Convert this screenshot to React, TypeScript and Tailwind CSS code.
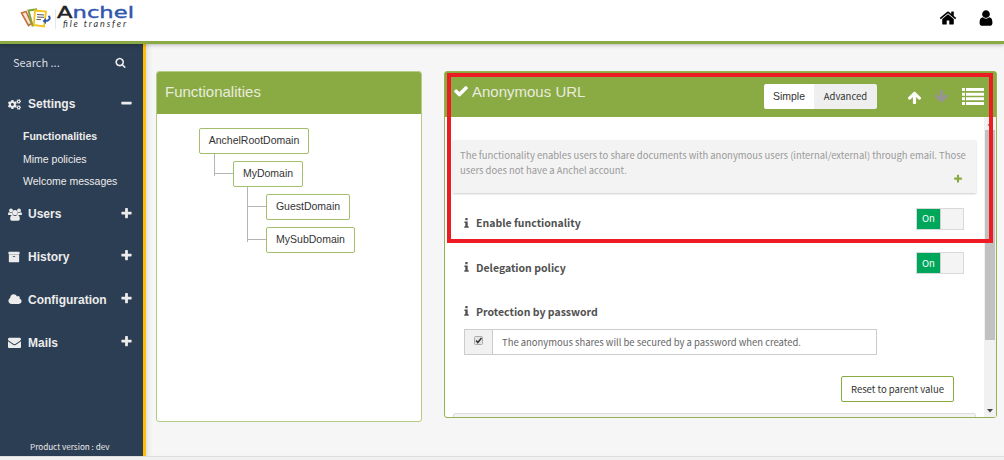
import React from "react";
import { FaCogs } from "react-icons/fa";

const SANS = "font-['Liberation_Sans',Arial,sans-serif]";
const HUMAN = "font-['Noto_Sans_CJK_SC','Noto_Sans',sans-serif]";

const PATHS = {
  search:
    "M1216 832q0-185-131.5-316.5t-316.5-131.5-316.5 131.5-131.5 316.5 131.5 316.5 316.5 131.5 316.5-131.5 131.5-316.5zm512 832q0 52-38 90t-90 38q-54 0-90-38l-343-342q-179 124-399 124-143 0-273.5-55.5t-225-150-150-225-55.5-273.5 55.5-273.5 150-225 225-150 273.5-55.5 273.5 55.5 225 150 150 225 55.5 273.5q0 220-124 399l343 343q37 37 37 90z",
  plus: "M1600 736v192q0 40-28 68t-68 28h-416v416q0 40-28 68t-68 28h-192q-40 0-68-28t-28-68v-416h-416q-40 0-68-28t-28-68v-192q0-40 28-68t68-28h416v-416q0-40 28-68t68-28h192q40 0 68 28t28 68v416h416q40 0 68 28t28 68z",
  minus: "M1600 736v192q0 40-28 68t-68 28h-1216q-40 0-68-28t-28-68v-192q0-40 28-68t68-28h1216q40 0 68 28t28 68z",
  home: "M1472 992v480q0 26-19 45t-45 19h-384v-384h-256v384h-384q-26 0-45-19t-19-45v-480q0-1 .5-3t.5-3l575-474 575 474q1 2 1 6zm223-69l-62 74q-8 9-21 11h-3q-13 0-21-7l-692-577-692 577q-12 8-24 7-13-2-21-11l-62-74q-8-10-7-23.5t11-21.5l719-599q32-26 76-26t76 26l244 204v-195q0-14 9-23t23-9h192q14 0 23 9t9 23v408l219 182q10 8 11 21.5t-7 23.5z",
  user: "M1536 1399q0 109-62.5 187t-150.5 78h-854q-88 0-150.5-78t-62.5-187q0-85 8.5-160.5t31.5-152 58.5-131 94-89 134.5-34.5q131 128 313 128t313-128q76 0 134.5 34.5t94 89 58.5 131 31.5 152 8.5 160.5zm-256-887q0 159-112.5 271.5t-271.5 112.5-271.5-112.5-112.5-271.5 112.5-271.5 271.5-112.5 271.5 112.5 112.5 271.5z",
  check:
    "M1671 566q0 40-28 68l-724 724-136 136q-28 28-68 28t-68-28l-136-136-362-362q-28-28-28-68t28-68l136-136q28-28 68-28t68 28l294 295 656-657q28-28 68-28t68 28l136 136q28 28 28 68z",
  arrow:
    "M1675 971q0 51-37 90l-75 75q-38 38-91 38-54 0-90-38l-294-293v704q0 52-37.5 84.5t-90.5 32.5h-128q-53 0-90.5-32.5t-37.5-84.5v-704l-294 293q-36 38-90 38t-90-38l-75-75q-38-38-38-90 0-53 38-91l651-651q35-37 90-37 54 0 91 37l651 651q37 39 37 91z",
  archive:
    "M1088 832q0-26-19-45t-45-19h-256q-26 0-45 19t-19 45 19 45 45 19h256q26 0 45-19t19-45zm576-192v960q0 26-19 45t-45 19h-1408q-26 0-45-19t-19-45v-960q0-26 19-45t45-19h1408q26 0 45 19t19 45zm64-448v256q0 26-19 45t-45 19h-1536q-26 0-45-19t-19-45v-256q0-26 19-45t45-19h1536q26 0 45 19t19 45z",
  envelope:
    "M1792 710v794q0 66-47 113t-113 47h-1472q-66 0-113-47t-47-113v-794q44 49 101 87 362 246 497 345 57 42 92.5 65.5t94.5 48 110 24.5h2q51 0 110-24.5t94.5-48 92.5-65.5q170-123 498-345 57-39 100-87zm0-294q0 79-49 151t-122 123q-376 261-468 325-10 7-42.5 31t-54 38.5-52 32.5-57.5 27-50 9h-2q-23 0-50-9t-57.5-27-52-32.5-54-38.5-42.5-31q-91-64-262-182.5t-205-142.5q-62-42-117-115.5t-55-136.5q0-78 41.5-130t118.5-52h1472q65 0 112.5 47t47.5 113z",
  cloud:
    "M1984 1152q0 159-112.5 271.5t-271.5 112.5h-1088q-185 0-316.5-131.5t-131.5-316.5q0-132 71-241.5t187-163.5q-2-28-2-43 0-212 150-362t362-150q158 0 286.5 88t187.5 230q70-62 166-62 106 0 181 75t75 181q0 75-41 138 129 30 213 134.5t84 239.5z",
};

function Icon({ name, className, wide = false }: { name: keyof typeof PATHS; className: string; wide?: boolean }) {
  return (
    <svg viewBox={wide ? "0 0 2048 1792" : "0 0 1792 1792"} className={`shrink-0 fill-current ${className}`}>
      <path d={PATHS[name]} />
    </svg>
  );
}

function GroupIcon() {
  return (
    <svg viewBox="0 0 14 13" className="h-[13px] w-[14px] fill-current">
      <circle cx="3" cy="2.400" r="1.900" />
      <circle cx="11" cy="2.400" r="1.900" />
      <path d="M0 6.500C0 4.800 .5 4.200 1.300 4.200C2.500 5 3.500 5 4.200 4.600C4.200 5.600 4.500 6.300 5 7H1.200C.4 7 0 6.900 0 6.500ZM14 6.500C14 4.800 13.500 4.200 12.700 4.200C11.500 5 10.500 5 9.800 4.600C9.800 5.600 9.500 6.300 9 7H12.800C13.600 7 14 6.900 14 6.500Z" />
      <circle cx="7" cy="4.500" r="2.600" />
      <path d="M2.200 10.800C2.200 8.500 3 7.100 4.500 7.100C6 8.200 8 8.200 9.500 7.100C11 7.100 11.800 8.500 11.800 10.800C11.800 12 11.200 12.700 10.200 12.700H3.800C2.800 12.700 2.200 12 2.200 10.800Z" />
    </svg>
  );
}

function InfoIcon() {
  return (
    <svg viewBox="0 0 5 10" className="mb-[2px] h-[10px] w-[5px] shrink-0 fill-current">
      <path d="M1.300 0H3.600V2.200H1.300ZM.4 3.400H3.700V8.200H4.700V9.800H.3V8.200H1.300V5H.4Z" />
    </svg>
  );
}

function Logo() {
  return (
    <svg viewBox="0 0 120 30" className="h-[30px] w-[120px]">
      <path d="M1.500 9L6 7.500L11.500 19.500L8.500 21.500Z" fill="#f6e6da" stroke="#c4703f" strokeWidth="1.600" />
      <path d="M8.500 6.500L16 5.500L17.500 20.500L12.500 21.500Z" fill="#fff" stroke="#7fa63c" strokeWidth="2" />
      <path d="M15 6.500L26 7.500L24 22.500L13.800 21Z" fill="#fff" stroke="#f5c31c" strokeWidth="1.800" />
      <path d="M17 10.500L24 11M17 13L24 13.300M16.500 15.500L21 15.700" stroke="#555" strokeWidth="1" />
      <path d="M28.500 12C31 14 29.500 17 25 17" fill="none" stroke="#3156ad" strokeWidth="1.900" />
      <path d="M22.500 17L26 14L26 20Z" fill="#3156ad" />
      <path d="M35.500 5V25" stroke="#e6e6e6" strokeWidth="1" />
      <text x="37" y="14" fontSize="15.500" textLength="77" lengthAdjust="spacingAndGlyphs" className="font-['DejaVu_Sans',sans-serif]">
        <tspan fill="#222" stroke="#222" strokeWidth="0.400">A</tspan>
        <tspan fill="#3156ad" stroke="#3156ad" strokeWidth="0.400">nchel</tspan>
      </text>
      <text x="43" y="23" fontSize="9" fontStyle="italic" textLength="63" lengthAdjust="spacing" fill="#333" className="font-['Lato',sans-serif]">
        file transfer
      </text>
    </svg>
  );
}

function MenuItem({ icon, label, open = false }: { icon: React.ReactNode; label: string; open?: boolean }) {
  return (
    <div className="flex h-[20px] items-center pl-[8px] pr-[10px]">
      <span className="flex w-[20px] shrink-0 items-center">{icon}</span>
      <span className="grow text-[12px] font-bold">{label}</span>
      <Icon name={open ? "minus" : "plus"} className="mb-[2px] size-[13px]" />
    </div>
  );
}

function Sidebar() {
  return (
    <aside className={`flex w-[146px] shrink-0 flex-col border-r-[3px] border-[#fdbf07] bg-[#2c3e53] text-[#ececec] ${SANS}`}>
      <div className="flex h-[36px] items-center justify-between pl-[13px] pr-[17px]">
        <span className={`text-[11px] text-[#d8dce0] ${HUMAN}`}>Search ...</span>
        <Icon name="search" className="size-[11px]" />
      </div>
      <nav className="flex flex-col pt-[14px]">
        <MenuItem icon={<FaCogs className="size-[13px]" />} label="Settings" open />
        <div className="flex h-[90px] flex-col pl-[23px] pt-[11px] text-[10.500px] leading-[22.500px]">
          <span className="font-bold">Functionalities</span>
          <span>Mime policies</span>
          <span>Welcome messages</span>
        </div>
        <div className="flex flex-col gap-[22.900px]">
          <MenuItem icon={<GroupIcon />} label="Users" />
          <MenuItem icon={<Icon name="archive" className="size-[12px]" />} label="History" />
          <MenuItem icon={<Icon name="cloud" wide className="h-[13px] w-[14px]" />} label="Configuration" />
          <MenuItem icon={<Icon name="envelope" className="size-[13px]" />} label="Mails" />
        </div>
      </nav>
      <div className={`mt-auto flex h-[18px] items-center pl-[30px] text-[8.150px] leading-none ${HUMAN}`}>Product version : dev</div>
    </aside>
  );
}

function Domain({ label, width }: { label: string; width: string }) {
  return (
    <div className={`flex h-[26px] items-center justify-center rounded-[2px] border border-[#a3bf6b] bg-white text-[10.500px] text-[#333] ${width}`}>
      {label}
    </div>
  );
}

function Branch({ children, last = false }: { children: React.ReactNode; last?: boolean }) {
  return (
    <div className="flex">
      <div className={`flex w-[19px] shrink-0 flex-col border-l border-[#b5b5b5] ${last ? "h-[22px]" : "h-[33px]"}`}>
        <div className="h-[20px] border-b border-[#b5b5b5]" />
      </div>
      <div className="pt-[7px]">{children}</div>
    </div>
  );
}

function Functionalities() {
  return (
    <section className={`flex h-[351px] w-[266px] shrink-0 flex-col rounded-[3px] border border-[#b5cb86] bg-white ${SANS}`}>
      <h2 className="h-[42px] rounded-t-[2px] bg-[#8aaa43] pl-[8px] text-[15px] leading-[40px] text-[#e8ecdf]">Functionalities</h2>
      <div className="flex flex-col pl-[42px] pt-[14px]">
        <Domain label="AnchelRootDomain" width="w-[110px]" />
        <div className="pl-[15px]">
          <Branch last>
            <Domain label="MyDomain" width="w-[70px]" />
            <div className="pl-[14px]">
              <Branch>
                <Domain label="GuestDomain" width="w-[84px]" />
              </Branch>
              <Branch last>
                <Domain label="MySubDomain" width="w-[89px]" />
              </Branch>
            </div>
          </Branch>
        </div>
      </div>
    </section>
  );
}

function Toggle() {
  return (
    <div className="flex h-[22px] w-[48px] border border-[#d9d9d9] bg-[#f4f4f4] text-[9.500px]">
      <span className="flex w-[24px] items-center justify-center border-r border-[#cfcfcf] bg-[#00a65a] leading-none text-white">On</span>
    </div>
  );
}

function Setting({ label, children }: { label: string; children?: React.ReactNode }) {
  return (
    <div className="flex h-[44.300px] items-start justify-between pl-[19px] pr-[20px]">
      <div className="flex h-[31px] items-center gap-[7px] text-[10.500px] font-bold text-[#505050]">
        <InfoIcon />
        <span className="leading-none">{label}</span>
      </div>
      {children}
    </div>
  );
}

function Scrollbar() {
  return (
    <div className="flex w-[12px] shrink-0 flex-col items-center bg-[#f1f1f1]">
      <svg viewBox="0 0 12 13" className="h-[13px] w-[12px]">
        <path d="M3.500 8.500L6 5.500L8.500 8.500Z" fill="#555" />
      </svg>
      <div className="h-[210px] w-[10px] bg-[#c1c1c1]" />
      <svg viewBox="0 0 12 13" className="mt-auto h-[13px] w-[12px]">
        <path d="M3 5L9 5L6 8.500Z" fill="#444" />
      </svg>
    </div>
  );
}

function AnonymousUrl() {
  return (
    <section className={`relative flex h-[347px] w-[553px] shrink-0 flex-col rounded-[3px] border border-[#94b352] bg-white ${HUMAN}`}>
      <header className={`flex h-[45px] shrink-0 items-start bg-[#8aaa43] pl-[8px] ${SANS}`}>
        <Icon name="check" className="mt-[11px] size-[16px] text-white" />
        <h2 className="ml-[3px] grow text-[15px] leading-[40px] text-[#e8ecdf]">Anonymous URL</h2>
        <div className="mr-[30px] mt-[12px] flex h-[25px] overflow-hidden rounded-[2px] text-[#333]">
          <span className="flex w-[50px] items-center justify-center bg-white text-[10.500px]">Simple</span>
          <span className={`flex w-[63px] items-center justify-center bg-[#efefef] text-[9.500px] ${HUMAN}`}>Advanced</span>
        </div>
        <Icon name="arrow" className="mt-[18px] size-[15px] text-white" />
        <Icon name="arrow" className="ml-[12px] mt-[17px] size-[15px] rotate-180 text-[#959595]" />
        <svg viewBox="0 0 22 17" className="ml-[13px] mr-[12px] mt-[16px] h-[17px] w-[22px] fill-white">
          <path d="M0 0h3v3H0zM4 0h18v3H4zM0 4.700h3v3H0zM4 4.700h18v3H4zM0 9.300h3v3H0zM4 9.300h18v3H4zM0 14h3v3H0zM4 14h18v3H4z" />
        </svg>
      </header>
      <div className="flex min-h-0 grow">
        <div className="flex min-w-0 grow flex-col overflow-hidden">
          <div className="mx-[8px] mt-[23px] flex h-[53px] shrink-0 flex-col bg-[#f3f3f3] pl-[7px] pt-[7.500px] text-[9.460px] leading-[15px] text-[#999] shadow-[0_1px_2px_#ccc]">
            <span className="whitespace-nowrap">The functionality enables users to share documents with anonymous users (internal/external) through email. Those</span>
            <div className="flex justify-between pr-[13px]">
              <span>users does not have a Anchel account.</span>
              <Icon name="plus" className="mt-[11px] size-[10px] text-[#8aaa43]" />
            </div>
          </div>
          <div className="flex shrink-0 flex-col pt-[15px]">
            <Setting label="Enable functionality">
              <Toggle />
            </Setting>
            <Setting label="Delegation policy">
              <Toggle />
            </Setting>
            <Setting label="Protection by password" />
          </div>
          <div className="-mt-[12px] ml-[19px] flex h-[26px] w-[413px] shrink-0 border border-[#ccc]">
            <span className="flex w-[28px] items-center justify-center border-r border-[#ccc] bg-[#f1f1f1]">
              <svg viewBox="0 0 9 9" className="mb-[3px] size-[9px]">
                <rect x="0.500" y="0.500" width="8" height="8" rx="1" fill="#e6e6e6" stroke="#aaa" />
                <path d="M2 4.500L3.800 6.500L7.500 2" fill="none" stroke="#333" strokeWidth="1.500" />
              </svg>
            </span>
            <span className="flex items-center pl-[9px] text-[9.460px] text-[#666]">The anonymous shares will be secured by a password when created.</span>
          </div>
          <div className="mr-[30px] mt-[21px] flex h-[26px] w-[113px] shrink-0 items-center justify-center self-end rounded-[2px] border border-[#8aaa43] text-[9.500px] text-[#333]">
            Reset to parent value
          </div>
          <div className="mx-[8px] mt-[11px] h-[10px] shrink-0 rounded-t-[2px] border border-[#ddd] bg-[#f3f3f3]" />
        </div>
        <Scrollbar />
      </div>
      <div className="absolute left-[2px] top-[1px] h-[170px] w-[546px] border-4 border-[#ed1c24]" />
    </section>
  );
}

export default function App() {
  return (
    <div className={`flex h-[460px] w-[1004px] flex-col overflow-hidden bg-[#f6f6f6] ${SANS}`}>
      <header className="z-10 flex h-[44px] shrink-0 items-start border-b-[3px] border-[#8aaa43] bg-white pl-[20px] pr-[9px] pt-[4px] shadow-[0_1px_4px_rgba(0,0,0,0.25)]">
        <Logo />
        <div className="ml-auto flex gap-[20px] pt-[5px] text-black">
          <Icon name="home" className="size-[18px]" />
          <Icon name="user" className="size-[18px]" />
        </div>
      </header>
      <div className="flex h-[412px] shrink-0">
        <Sidebar />
        <main className="flex grow gap-[22px] pl-[10px] pt-[27px] shadow-[inset_5px_0_5px_-3px_rgba(0,0,0,0.1)]">
          <Functionalities />
          <AnonymousUrl />
        </main>
      </div>
      <footer className="grow border-t border-[#ddd] bg-[#f0f0f0]" />
    </div>
  );
}
